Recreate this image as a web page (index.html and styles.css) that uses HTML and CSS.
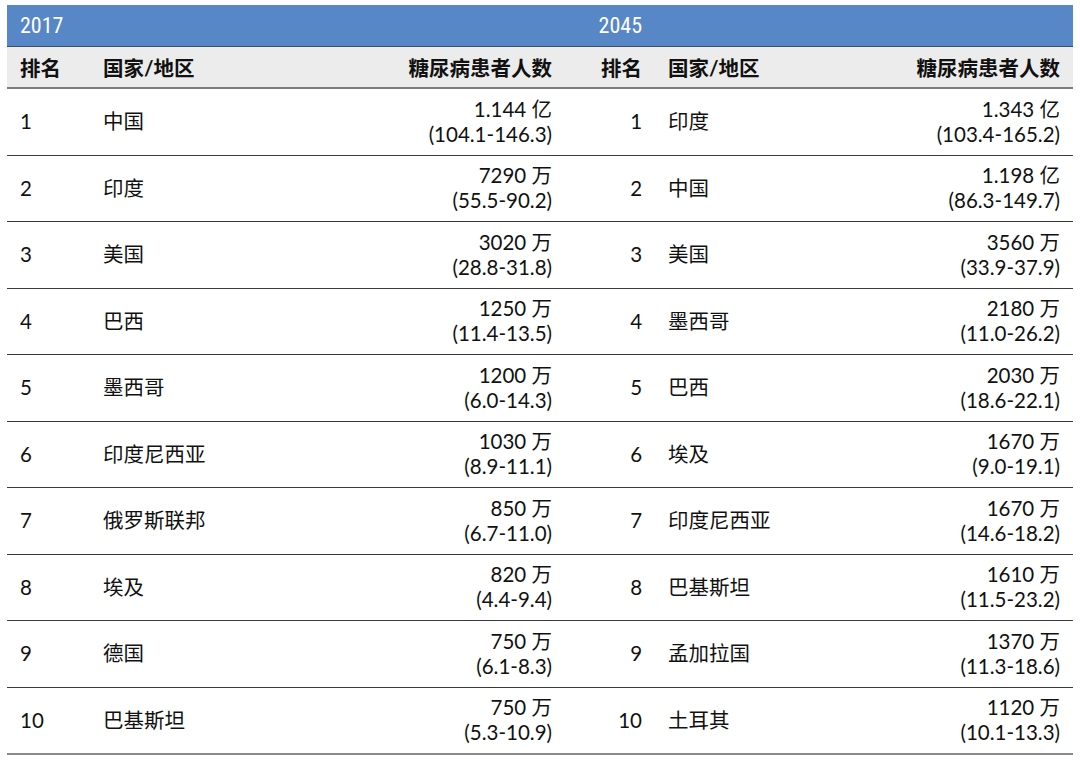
FILE: index.html
```html
<!DOCTYPE html>
<html lang="zh">
<head>
<meta charset="utf-8">
<link rel="stylesheet" href="styles.css">
</head>
<body>
<table class="rank-table">
  <colgroup>
    <col class="c-rank">
    <col class="c-country">
    <col class="c-value">
    <col class="c-rank2">
    <col class="c-country2">
    <col class="c-value2">
  </colgroup>
  <thead>
    <tr class="year-row">
      <th colspan="3" class="year-left">2017</th>
      <th class="year-right">2045</th>
      <th colspan="2"></th>
    </tr>
    <tr class="label-row">
      <th class="rank">排名</th>
      <th class="country">国家/地区</th>
      <th class="value">糖尿病患者人数</th>
      <th class="rank2">排名</th>
      <th class="country2">国家/地区</th>
      <th class="value">糖尿病患者人数</th>
    </tr>
  </thead>
  <tbody>
    <tr><td class="rank">1</td><td class="country">中国</td><td class="value">1.144 亿<br>(104.1-146.3)</td><td class="rank2">1</td><td class="country2">印度</td><td class="value">1.343 亿<br>(103.4-165.2)</td></tr>
    <tr><td class="rank">2</td><td class="country">印度</td><td class="value">7290 万<br>(55.5-90.2)</td><td class="rank2">2</td><td class="country2">中国</td><td class="value">1.198 亿<br>(86.3-149.7)</td></tr>
    <tr><td class="rank">3</td><td class="country">美国</td><td class="value">3020 万<br>(28.8-31.8)</td><td class="rank2">3</td><td class="country2">美国</td><td class="value">3560 万<br>(33.9-37.9)</td></tr>
    <tr><td class="rank">4</td><td class="country">巴西</td><td class="value">1250 万<br>(11.4-13.5)</td><td class="rank2">4</td><td class="country2">墨西哥</td><td class="value">2180 万<br>(11.0-26.2)</td></tr>
    <tr><td class="rank">5</td><td class="country">墨西哥</td><td class="value">1200 万<br>(6.0-14.3)</td><td class="rank2">5</td><td class="country2">巴西</td><td class="value">2030 万<br>(18.6-22.1)</td></tr>
    <tr><td class="rank">6</td><td class="country">印度尼西亚</td><td class="value">1030 万<br>(8.9-11.1)</td><td class="rank2">6</td><td class="country2">埃及</td><td class="value">1670 万<br>(9.0-19.1)</td></tr>
    <tr><td class="rank">7</td><td class="country">俄罗斯联邦</td><td class="value">850 万<br>(6.7-11.0)</td><td class="rank2">7</td><td class="country2">印度尼西亚</td><td class="value">1670 万<br>(14.6-18.2)</td></tr>
    <tr><td class="rank">8</td><td class="country">埃及</td><td class="value">820 万<br>(4.4-9.4)</td><td class="rank2">8</td><td class="country2">巴基斯坦</td><td class="value">1610 万<br>(11.5-23.2)</td></tr>
    <tr><td class="rank">9</td><td class="country">德国</td><td class="value">750 万<br>(6.1-8.3)</td><td class="rank2">9</td><td class="country2">孟加拉国</td><td class="value">1370 万<br>(11.3-18.6)</td></tr>
    <tr class="last"><td class="rank">10</td><td class="country">巴基斯坦</td><td class="value">750 万<br>(5.3-10.9)</td><td class="rank2">10</td><td class="country2">土耳其</td><td class="value">1120 万<br>(10.1-13.3)</td></tr>
  </tbody>
</table>
</body>
</html>
```

FILE: styles.css
```css
html, body {
  margin: 0;
  padding: 0;
  background: #ffffff;
}

body {
  padding: 5px 7px;
  font-family: "Lato", "Noto Sans CJK SC", sans-serif;
  font-size: 20.5px;
  color: #111111;
}

.rank-table {
  width: 1066px;
  border-collapse: collapse;
  table-layout: fixed;
}

.c-rank { width: 89px; }
.c-country { width: 204px; }
.c-value { width: 265px; }
.c-rank2 { width: 85px; }
.c-country2 { width: 210px; }
.c-value2 { width: 213px; }

th, td {
  padding: 0;
  font-weight: normal;
  vertical-align: middle;
}

.year-row th {
  background: #5787c6;
  color: #ffffff;
  height: 41px;
  border-bottom: 1px solid #3d4f66;
  font-family: "Liberation Sans Narrow", "Roboto Condensed", "Noto Sans", sans-serif;
  font-size: 22px;
}

.year-left {
  text-align: left;
  padding-left: 13px;
}

.year-right {
  text-align: right;
  padding-right: 8px;
}

.label-row th {
  background: #ececec;
  height: 40px;
  font-weight: bold;
  color: #111111;
  border-bottom: 2px solid #7d7d7d;
}

tbody td {
  height: 65.5px;
  border-bottom: 1px solid #3a3a3a;
  line-height: 25px;
}

tbody tr.last td {
  border-bottom: 2px solid #8a8a8a;
}

.rank {
  text-align: left;
  padding-left: 13px;
}

.country {
  text-align: left;
  padding-left: 7px;
}

.value {
  text-align: right;
  padding-right: 13px;
}

.rank2 {
  text-align: right;
  padding-right: 8px;
}

.country2 {
  text-align: left;
  padding-left: 18px;
}
```
